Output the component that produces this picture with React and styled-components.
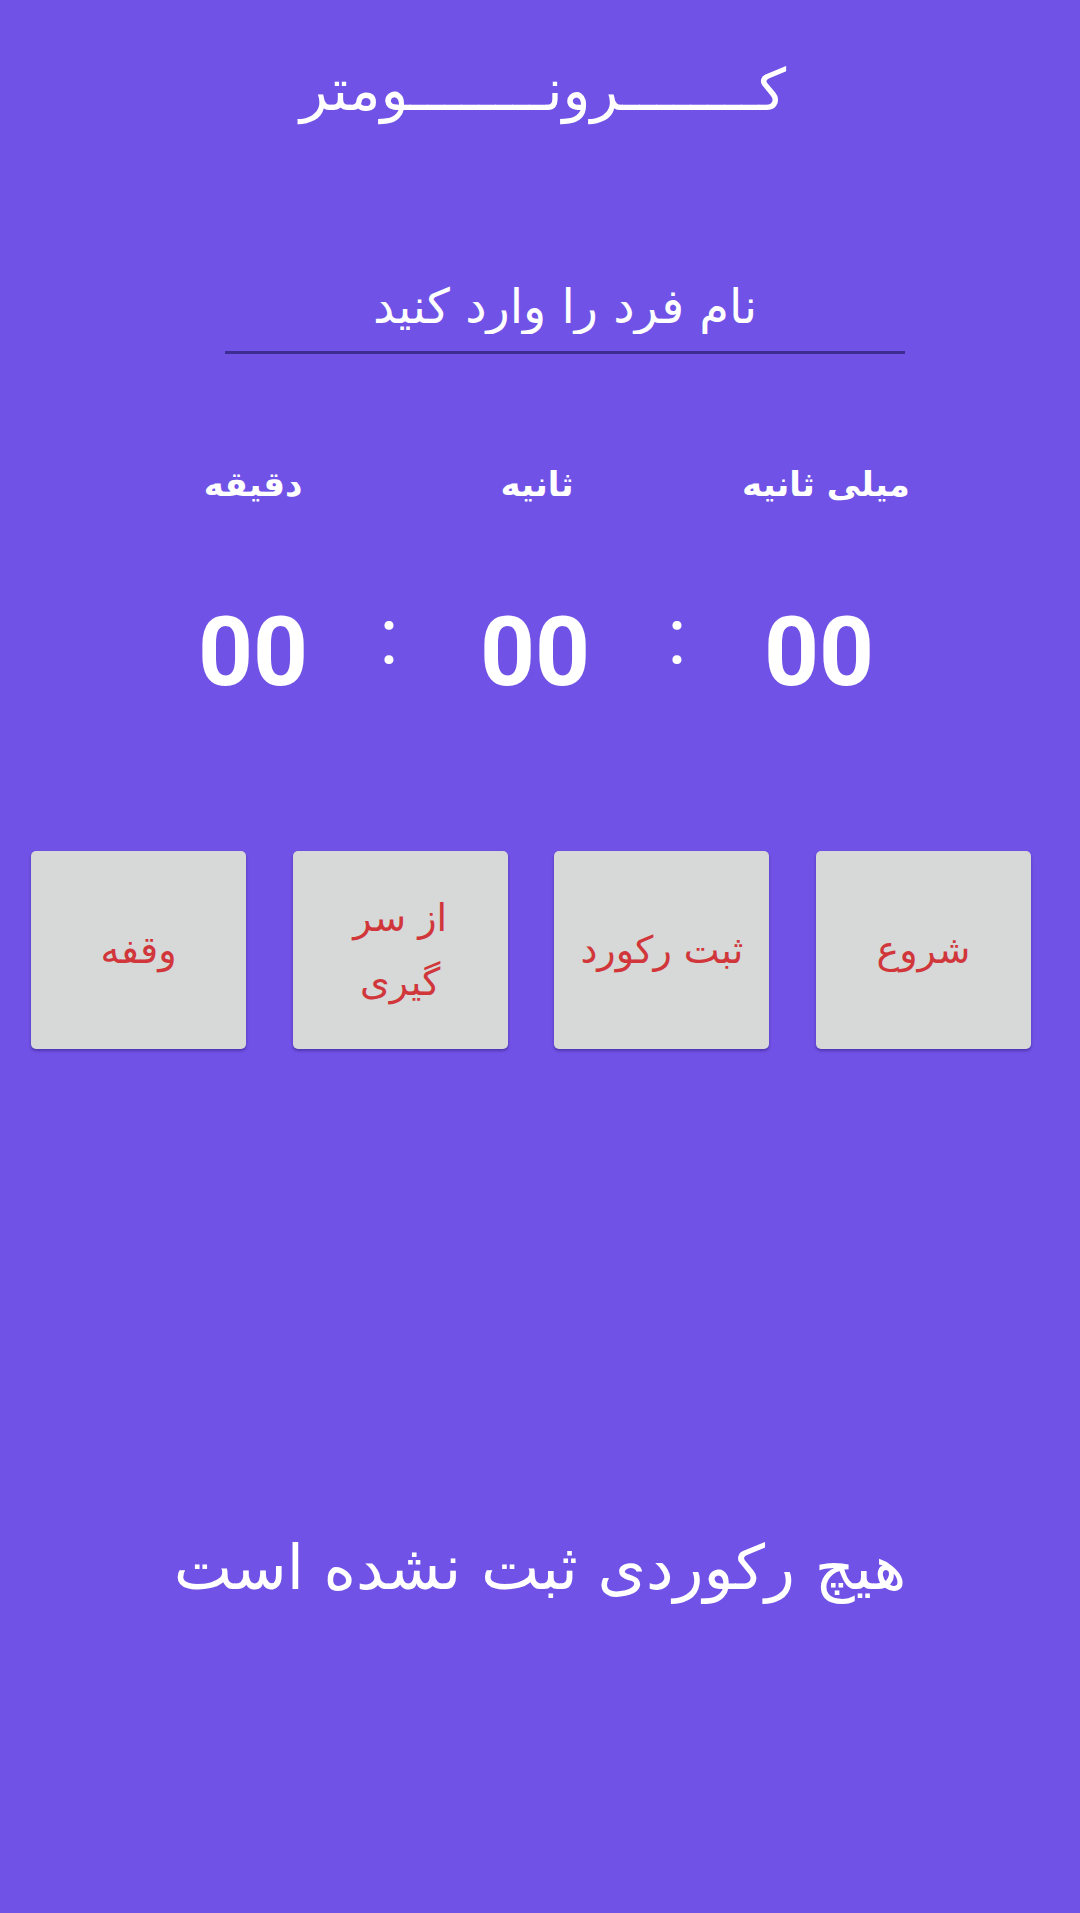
import React from "react";
import styled, { createGlobalStyle } from "styled-components";

const PURPLE = "#7152e6";

const GlobalStyle = createGlobalStyle`
  html, body {
    margin: 0;
    padding: 0;
    background: ${PURPLE};
  }
  body {
    font-family: "DejaVu Sans", sans-serif;
    color: #fff;
  }
`;

const Page = styled.div`
  min-height: 1913px;
  display: flex;
  flex-direction: column;
  align-items: flex-start;
  background: ${PURPLE};
`;

const Title = styled.h1`
  align-self: stretch;
  margin: 50px 0 0;
  text-align: center;
  font-size: 58px;
  font-weight: 400;
  line-height: 80px;
  padding-left: 6px;
`;

const NameField = styled.div`
  width: 680px;
  margin: 137px 0 0 225px;
  border-bottom: 3px solid #3d2c92;
`;

const NameInput = styled.input`
  display: block;
  width: 100%;
  box-sizing: border-box;
  border: none;
  outline: none;
  background: transparent;
  direction: rtl;
  text-align: center;
  font-family: "DejaVu Sans", sans-serif;
  font-size: 48px;
  height: 84px;
  padding: 0 0 6px;
  color: #fff;

  &::placeholder {
    color: #fff;
    opacity: 1;
  }
`;

const Timer = styled.div`
  display: grid;
  grid-template-columns: 236px 36px 256px 28px 256px;
  grid-template-rows: 60px 120px;
  row-gap: 78px;
  align-items: center;
  justify-items: center;
  margin: 100px 0 0 135px;
`;

const Label = styled.div`
  direction: rtl;
  font-size: 34px;
  font-weight: 700;
  white-space: nowrap;
  margin-left: ${(p) => p.$nudge || 0}px;
`;

const Digits = styled.div`
  font-family: Roboto, "Liberation Sans", sans-serif;
  font-size: 96px;
  font-weight: 700;
  line-height: 120px;
`;

const Colon = styled.div`
  font-family: Roboto, "Liberation Sans", sans-serif;
  font-size: 80px;
  font-weight: 400;
  line-height: 100px;
  margin-bottom: 30px;
`;

const Buttons = styled.div`
  display: flex;
  flex-direction: row-reverse;
  justify-content: space-between;
  width: 1000px;
  margin: 139px 0 0 31px;
`;

const Button = styled.button`
  width: 215px;
  height: 198px;
  padding: 0 22px;
  border: none;
  border-radius: 5px;
  background: #d7d8d8;
  box-shadow: 0 2px 3px rgba(40, 20, 110, 0.45);
  color: #d0363a;
  font-family: "DejaVu Sans", sans-serif;
  font-size: 38px;
  line-height: 64px;
  direction: rtl;
`;

const Empty = styled.p`
  align-self: stretch;
  direction: rtl;
  margin: 474px 0 0;
  text-align: center;
  font-size: 62px;
  line-height: 90px;
`;

const units = [
  { label: "دقیقه", nudge: 0 },
  { label: "ثانیه", nudge: 4 },
  { label: "میلی ثانیه", nudge: 14 },
];

export default function App() {
  return (
    <>
      <GlobalStyle />
      <Page>
        <Title dir="rtl">کــــــــرونــــــــومتر</Title>
        <NameField>
          <NameInput placeholder="نام فرد را وارد کنید" />
        </NameField>
        <Timer>
          {units.map((u, i) => (
            <React.Fragment key={u.label}>
              <Label $nudge={u.nudge} style={{ gridColumn: i * 2 + 1, gridRow: 1 }}>
                {u.label}
              </Label>
              <Digits style={{ gridColumn: i * 2 + 1, gridRow: 2 }}>00</Digits>
              {i < 2 && (
                <Colon style={{ gridColumn: i * 2 + 2, gridRow: 2 }}>:</Colon>
              )}
            </React.Fragment>
          ))}
        </Timer>
        <Buttons>
          <Button>شروع</Button>
          <Button>ثبت رکورد</Button>
          <Button>از سر گیری</Button>
          <Button>وقفه</Button>
        </Buttons>
        <Empty>هیچ رکوردی ثبت نشده است</Empty>
      </Page>
    </>
  );
}
